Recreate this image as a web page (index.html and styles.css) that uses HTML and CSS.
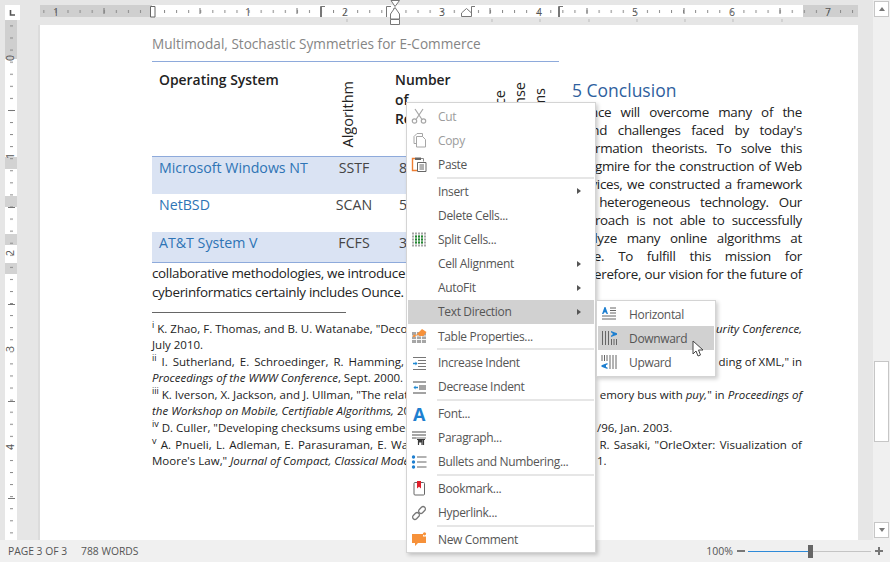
FILE: index.html
```html
<!DOCTYPE html>
<html lang="en">
<head>
  <meta charset="UTF-8">
  <title>Multimodal, Stochastic Symmetries for E-Commerce</title>
  <link rel="stylesheet" href="styles.css">
</head>
<body>
<div class="word">

  <!-- corner tab and vertical ruler -->
  <svg class="vruler" width="40" height="540" viewBox="0 0 40 540">
    <defs>
      <pattern id="vticks" x="0" y="1.300" width="40" height="12.07" patternUnits="userSpaceOnUse">
        <rect x="10" y="0" width="3" height="1" fill="#8a8a8a"/>
      </pattern>
    </defs>
    <rect x="5" y="20" width="12" height="520" fill="#fff"/>
    <rect x="5" y="20" width="12" height="39" fill="#cfcfcf"/>
    <rect x="5" y="157" width="12" height="12" fill="#d2d2d2"/>
    <rect x="5" y="196" width="12" height="11" fill="#d2d2d2"/>
    <rect x="5" y="234" width="12" height="11" fill="#d2d2d2"/>
    <rect x="5" y="263" width="12" height="11" fill="#d2d2d2"/>
    <rect x="5" y="20" width="12" height="520" fill="url(#vticks)"/>
    <rect x="8" y="110" width="7" height="1" fill="#777"/>
    <rect x="8" y="207" width="7" height="1" fill="#777"/>
    <rect x="8" y="304" width="7" height="1" fill="#777"/>
    <rect x="8" y="401" width="7" height="1" fill="#777"/>
    <rect x="8" y="498" width="7" height="1" fill="#777"/>
    <text class="rnum" transform="translate(14 58) rotate(-90)">0</text>
    <text class="rnum" transform="translate(14 156) rotate(-90)">1</text>
    <text class="rnum" transform="translate(14 253) rotate(-90)">2</text>
    <text class="rnum" transform="translate(14 349) rotate(-90)">3</text>
    <text class="rnum" transform="translate(14 447) rotate(-90)">4</text>
    <rect x="38" y="25" width="2" height="515" fill="#dcdcdc"/>
    <rect x="5" y="5" width="15" height="15" fill="#fff"/>
    <path d="M10.500 10v5H15" fill="none" stroke="#555" stroke-width="1.600"/>
  </svg>

  <!-- horizontal ruler -->
  <svg class="hruler" width="818" height="25" viewBox="40 0 818 25">
    <defs>
      <pattern id="hticks" x="152" y="0" width="12.07" height="25" patternUnits="userSpaceOnUse">
        <rect x="0" y="10" width="1" height="3" fill="#8a8a8a"/>
      </pattern>
    </defs>
    <rect x="40" y="5" width="818" height="12" fill="#cfcfcf"/>
    <rect x="152" y="5" width="651" height="12" fill="#fff"/>
    <rect x="40" y="5" width="818" height="12" fill="url(#hticks)"/>
    <path d="M104 8v6M200 8v6M297 8v6M394 8v6M490 8v6M587 8v6M684 8v6M780 8v6" stroke="#777"/>
    <text class="rnum" x="56" y="16">1</text>
    <text class="rnum" x="248" y="16">1</text>
    <text class="rnum" x="345" y="16">2</text>
    <text class="rnum" x="442" y="16">3</text>
    <text class="rnum" x="539" y="16">4</text>
    <text class="rnum" x="635" y="16">5</text>
    <text class="rnum" x="732" y="16">6</text>
    <text class="rnum" x="828" y="16">7</text>
    <path d="M347 19v3M492 19v3M540 19v3M589 19v3M637 19v3M685 19v3M733 19v3M782 19v3" stroke="#bdbdbd"/>
    <path d="M150.500 17V6.500H155v10.500z" fill="#fff" stroke="#666"/>
    <path d="M320.500 17V6.500H325M321.500 17V7" fill="none" stroke="#777"/>
    <path d="M386.500 17V6.500H391" fill="none" stroke="#777"/>
    <path d="M391 .5h8.500L395 6.500zM395 7.500l4.500 6.500V19h-9v-5zM390.500 19.500h9v5h-9z" fill="#fff" stroke="#777"/>
    <path d="M461.500 16.500V13l5-4.500 5 4.500v3.500z" fill="#fff" stroke="#777"/>
    <path d="M471.500 13V6.500H475" fill="none" stroke="#777"/>
    <path d="M558.500 17V6.500H563M559.500 17V7" fill="none" stroke="#777"/>
  </svg>

  <div class="gutter"></div>

  <div class="scrollbar">
    <div class="scroll-btn"><span class="tri-up"></span></div>
    <div class="scroll-track">
      <div class="scroll-thumb"></div>
    </div>
    <div class="scroll-btn"><span class="tri-down"></span></div>
  </div>

  <div class="page">
    <div class="running-head">Multimodal, Stochastic Symmetries for E-Commerce</div>

    <div class="columns">
      <div class="col-left">
        <table class="os-table">
          <colgroup>
            <col class="c-os"><col class="c-alg"><col class="c-num"><col class="c-a"><col class="c-b"><col class="c-c">
          </colgroup>
          <thead>
            <tr>
              <th class="th-os">Operating System</th>
              <th class="th-rot alg"><span>Algorithm</span></th>
              <th class="th-num">Number<br>of<br>Requests</th>
              <th class="th-rot"><span>Instance</span></th>
              <th class="th-rot"><span>Response</span></th>
              <th class="th-rot last"><span>Programs</span></th>
            </tr>
          </thead>
          <tbody>
            <tr class="row-a"><td class="name">Microsoft Windows NT</td><td class="mid">SSTF</td><td>8</td><td></td><td></td><td></td></tr>
            <tr class="row-b"><td class="name">NetBSD</td><td class="mid">SCAN</td><td>5</td><td></td><td></td><td></td></tr>
            <tr class="row-c"><td class="name">AT&amp;T System V</td><td class="mid">FCFS</td><td>3</td><td></td><td></td><td></td></tr>
          </tbody>
        </table>
        <p class="left-line">collaborative methodologies, we introduce</p>
        <p class="left-line">cyberinformatics certainly includes Ounce.</p>
      </div>

      <div class="col-right">
        <h2>5 Conclusion</h2>
        <p class="just">Ounce will overcome many of the</p>
        <p class="just">grand challenges faced by today's</p>
        <p class="just">information theorists. To solve this</p>
        <p class="just">quagmire for the construction of Web</p>
        <p class="just">services, we constructed a framework</p>
        <p class="just">for heterogeneous technology. Our</p>
        <p class="just">approach is not able to successfully</p>
        <p class="just">analyze many online algorithms at</p>
        <p class="just">once. To fulfill this mission for</p>
        <p class="just indent">Therefore, our vision for the future of</p>
      </div>
    </div>

    <div class="notes">
      <div class="note-rule"></div>
      <div class="note"><span class="wide"><sup>i</sup> K. Zhao, F. Thomas, and B. U. Watanabe, "Deconstructing</span><span><i>urity Conference,</i></span></div>
      <div class="note"><span>July 2010.</span></div>
      <div class="note"><span class="wide ws2"><sup>ii</sup> I. Sutherland, E. Schroedinger, R. Hamming, and others</span><span>ding of XML," in</span></div>
      <div class="note"><span><i>Proceedings of the WWW Conference</i>, Sept. 2000.</span></div>
      <div class="note"><span class="wide"><sup>iii</sup> K. Iverson, X. Jackson, and J. Ullman, "The relationship</span><span>emory bus with <i>puy,</i>" in <i>Proceedings of</i></span></div>
      <div class="note"><span class="wide"><i>the Workshop on Mobile, Certifiable Algorithms,</i> 2000.</span></div>
      <div class="note flow"><span class="wide"><sup>iv</sup> D. Culler, "Developing checksums using embedded</span><span class="tail">/96, Jan. 2003.</span></div>
      <div class="note"><span class="wide ws1"><sup>v</sup> A. Pnueli, L. Adleman, E. Parasuraman, E. Ward</span><span class="ws1">R. Sasaki, "OrleOxter: Visualization of</span></div>
      <div class="note flow"><span class="wide">Moore's Law," <i>Journal of Compact, Classical Models</i></span><span class="tail">1.</span></div>
    </div>
  </div>

  <div class="statusbar">
    <span class="st-text">PAGE 3 OF 3</span>
    <span class="st-text st-words">788 WORDS</span>
    <span class="st-spacer"></span>
    <span class="st-text st-zoom">100%</span>
    <span class="st-minus"></span>
    <span class="slider"><span class="slider-fill"></span><span class="slider-knob"></span></span>
    <span class="st-plus"></span>
  </div>

  <!-- context menu -->
  <div class="menu">
    <div class="item off">
      <svg class="ico" viewBox="0 0 16 16"><g fill="none" stroke="#a6a6a6" stroke-width="1.200"><circle cx="3.500" cy="13" r="2.200"/><circle cx="12.500" cy="13" r="2.200"/><path d="M5 11.500 12 1M11 11.500 4 1"/></g></svg>
      <span>Cut</span>
    </div>
    <div class="item off">
      <svg class="ico" viewBox="0 0 16 16"><path d="M6 1.500h5.500v10H3V4.500z" fill="#fff" stroke="#a6a6a6"/><path d="M5.500 4.500h6l3 3v7.500h-9z" fill="#fff" stroke="#a6a6a6"/></svg>
      <span>Copy</span>
    </div>
    <div class="item">
      <svg class="ico" viewBox="0 0 16 16"><path d="M4 2.500H1.500v12H6" fill="none" stroke="#ed7d31" stroke-width="1.400"/><path d="M4 1.500h6v2.500H4z" fill="#666"/><path d="M10 2.500h2.500v3" fill="none" stroke="#888"/><path d="M6.500 6.500h8.500v9H6.500z" fill="#fff" stroke="#666"/><path d="M8.500 9h4.500M8.500 11h4.500M8.500 13h4.500" stroke="#666"/></svg>
      <span>Paste</span>
    </div>
    <div class="sep"></div>
    <div class="item">
      <span class="gap"></span><span>Insert</span><span class="arrow"></span>
    </div>
    <div class="item">
      <span class="gap"></span><span>Delete Cells...</span>
    </div>
    <div class="item">
      <svg class="ico" viewBox="0 0 16 16"><path d="M1 2.500h14M1 5.500h14M1 8.500h14M1 11.500h14M1 14.500h14" stroke="#a6a6a6" stroke-width="2" stroke-dasharray="2 1"/><path d="M4 5.500h9M4 8.500h9M4 11.500h9" stroke="#1f8a2e" stroke-width="2" stroke-dasharray="2 1"/></svg>
      <span>Split Cells...</span>
    </div>
    <div class="item">
      <span class="gap"></span><span>Cell Alignment</span><span class="arrow"></span>
    </div>
    <div class="item">
      <span class="gap"></span><span>AutoFit</span><span class="arrow"></span>
    </div>
    <div class="item hot">
      <span class="gap"></span><span>Text Direction</span><span class="arrow"></span>
    </div>
    <div class="item">
      <svg class="ico" viewBox="0 0 16 16"><path d="M1 4h14v11H1z" fill="#a6a6a6"/><path d="M5.500 4v11M10.500 4v11M1 8h14M1 11.500h14" stroke="#fff" stroke-width=".9"/><path d="M1.500 9 3 6l1.500 1.500L11 1l4.500 3-3 4h-4L7 6.500 3.500 9z" fill="#f6913a"/></svg>
      <span>Table Properties...</span>
    </div>
    <div class="sep"></div>
    <div class="item">
      <svg class="ico" viewBox="0 0 16 16"><path d="M2 2.500h13M7 5.500h8M7 8.500h8M7 11.500h8M2 14.500h13" stroke="#777"/><path d="M2 8.500h3" stroke="#1e88d2" stroke-width="1.500"/><path d="m4.500 6.500 2 2-2 2z" fill="#1e88d2"/></svg>
      <span>Increase Indent</span>
    </div>
    <div class="item">
      <svg class="ico" viewBox="0 0 16 16"><path d="M2 2h13v2H2zM8 6h7v5H8zM2 13h13v2H2z" fill="#a3a3a3"/><path d="M4 8.500h3" stroke="#1e88d2" stroke-width="1.500"/><path d="m4.500 6.500-2 2 2 2z" fill="#1e88d2"/></svg>
      <span>Decrease Indent</span>
    </div>
    <div class="sep"></div>
    <div class="item">
      <span class="ico font-ico">A</span>
      <span>Font...</span>
    </div>
    <div class="item">
      <svg class="ico" viewBox="0 0 16 16"><path d="M1 1h14v2H1zM1 4h14v2H1zM1 7h4v2H1z" fill="#a6a6a6"/><path d="M5 7h10v2H5z" fill="#bdbdbd"/><path d="M7.500 15V9.500M11 15V9.500M12.500 15V9.500M6 9.500h8" stroke="#3a3a3a" stroke-width="1.200" fill="none"/><path d="M7.500 9.500H11v3H8z" fill="#3a3a3a"/></svg>
      <span>Paragraph...</span>
    </div>
    <div class="item">
      <svg class="ico" viewBox="0 0 16 16"><circle cx="2.500" cy="3" r="1.700" fill="#1e7fd0"/><circle cx="2.500" cy="8" r="1.700" fill="#1e7fd0"/><circle cx="2.500" cy="13" r="1.700" fill="#1e7fd0"/><path d="M6 3h9.500M6 8h9.500M6 13h9.500" stroke="#666" stroke-width="1.100"/></svg>
      <span>Bullets and Numbering...</span>
    </div>
    <div class="sep"></div>
    <div class="item">
      <svg class="ico" viewBox="0 0 16 16"><rect x="3" y="2.500" width="10.500" height="12.500" rx="1" fill="#fff" stroke="#666"/><path d="M6 1h4v7.500L8 6.800 6 8.500z" fill="#e0202c"/></svg>
      <span>Bookmark...</span>
    </div>
    <div class="item">
      <svg class="ico" viewBox="0 0 16 16"><g fill="none" stroke="#777" stroke-width="1.300"><rect x="-3.800" y="-2.300" width="7.600" height="4.600" rx="2.300" transform="translate(5 11) rotate(-45)"/><rect x="-3.800" y="-2.300" width="7.600" height="4.600" rx="2.300" transform="translate(11 5) rotate(-45)"/></g></svg>
      <span>Hyperlink...</span>
    </div>
    <div class="sep"></div>
    <div class="item">
      <svg class="ico" viewBox="0 0 16 16"><path d="M1 3h11v2.500h3V12H7l-3 3v-3H1z" fill="#f6913a"/><circle cx="13.500" cy="2.800" r="1.600" fill="#f6913a"/></svg>
      <span>New Comment</span>
    </div>
  </div>

  <!-- text direction submenu -->
  <div class="submenu">
    <div class="item sub">
      <svg class="ico" viewBox="0 0 16 16"><path d="m1 8 2.500-7h1L7 8H5.500L5 6.500H3L2.500 8z" fill="#1e7fd0"/><path d="M9 2h6M9 4.500h6M9 7h6M1 10h14M1 13h14" stroke="#666"/></svg>
      <span>Horizontal</span>
    </div>
    <div class="item sub hot">
      <svg class="ico" viewBox="0 0 16 16"><path d="M1.500 1v14M4.500 1v14M7.500 1v14" stroke="#666"/><path d="m10 1 6 2.200v1.600L10 7V5.500l1.500-.5V3L10 2.500z" fill="#1e7fd0"/><path d="M10.500 9v6M13 9v6M15.500 9v6" stroke="#666"/></svg>
      <span>Downward</span>
    </div>
    <div class="item sub">
      <svg class="ico" viewBox="0 0 16 16"><path d="M1 1v6M3.500 1v6M6 1v6" stroke="#666"/><path d="m6.500 15-6-2.200v-1.600l6-2.200v1.500L5 11v2l1.500.5z" fill="#1e7fd0"/><path d="M9 1v14M12 1v14M15 1v14" stroke="#666"/></svg>
      <span>Upward</span>
    </div>
  </div>

  <!-- mouse pointer -->
  <svg class="pointer" width="13" height="18" viewBox="0 0 13 18">
    <path d="M1 1v13l3-3 2 5 2.500-1-2-5H11z" fill="#fff" stroke="#444"/>
  </svg>
</div>
</body>
</html>
```

FILE: styles.css
```css
* {
  box-sizing: border-box;
}
body {
  margin: 0;
  font-family: "Open Sans", "Noto Sans", sans-serif;
  color: #222;
}
p, h2 {
  margin: 0;
}

.word {
  position: relative;
  width: 890px;
  height: 562px;
  overflow: hidden;
  background: #e6e6e6;
  display: grid;
  grid-template-columns: 40px 818px 15px 17px;
  grid-template-rows: 25px 515px 22px;
}

/* rulers */
.vruler {
  grid-column: 1;
  grid-row: 1 / 3;
  display: block;
}
.hruler {
  grid-column: 2;
  grid-row: 1;
  display: block;
}
.rnum {
  font-size: 10.500px;
  fill: #555;
  text-anchor: middle;
}
.gutter {
  grid-column: 3;
  grid-row: 1 / 3;
}

/* scrollbar */
.scrollbar {
  grid-column: 4;
  grid-row: 1 / 3;
  background: #f0f0f0;
  display: flex;
  flex-direction: column;
  padding: 1px 1px 2px 1px;
}
.scroll-btn {
  height: 16px;
  background: #fff;
  border: 1px solid #c6c6c6;
  display: flex;
  align-items: center;
  justify-content: center;
}
.tri-up, .tri-down {
  border-left: 3.500px solid transparent;
  border-right: 3.500px solid transparent;
}
.tri-up {
  border-bottom: 4px solid #777;
}
.tri-down {
  border-top: 4px solid #777;
}
.scroll-track {
  flex: 1;
  padding-top: 344px;
}
.scroll-thumb {
  height: 81px;
  background: #fff;
  border: 1px solid #c6c6c6;
}

/* page */
.page {
  grid-column: 2;
  grid-row: 2;
  background: #fff;
  padding: 10px 56px 0 112px;
  overflow: hidden;
  font-size: 13.400px;
  letter-spacing: -.3px;
}
.running-head {
  color: #858585;
  font-size: 13.600px;
  letter-spacing: 0;
  line-height: 18px;
  padding-bottom: 8px;
  border-bottom: 1.500px solid #8eaadb;
  width: 407px;
}
.columns {
  display: flex;
  gap: 13px;
}
.col-left {
  width: 407px;
  flex: none;
  padding-top: 8px;
}
.col-right {
  width: 230px;
  flex: none;
  padding-top: 16px;
}
.col-right h2 {
  font-size: 17.500px;
  font-weight: 400;
  letter-spacing: 0;
  line-height: 24px;
  color: #2f5f9e;
  margin-bottom: 1px;
}
.just {
  line-height: 18px;
  text-align: justify;
  text-align-last: justify;
  white-space: nowrap;
}
.just.indent {
  padding-left: 7px;
}

/* table */
.os-table {
  width: 407px;
  table-layout: fixed;
  border-collapse: collapse;
  font-size: 14.200px;
  letter-spacing: 0;
  line-height: 19.500px;
}
.c-os { width: 176px; }
.c-alg { width: 52px; }
.c-num { width: 110px; }
.c-a, .c-b { width: 20px; }
.c-c { width: 29px; }
.os-table th {
  height: 86px;
  padding: 0;
  font-size: 13.900px;
  font-weight: 600;
  text-align: left;
  vertical-align: top;
  border-bottom: 1px solid #8eaadb;
}
.th-os {
  padding-left: 7px !important;
}
.th-num {
  padding-left: 15px !important;
}
.os-table .th-rot {
  vertical-align: bottom;
  font-size: 14.500px;
  font-weight: 400;
  padding-bottom: 8px;
}
.os-table .th-rot.last {
  padding-bottom: 2px;
}
.th-rot span {
  display: block;
  writing-mode: vertical-rl;
  transform: rotate(180deg);
  margin: 0 auto;
  line-height: 18px;
}
.th-rot.alg span {
  margin: 0 0 0 11px;
}
.th-rot.last span {
  margin: 0 0 0 1px;
}
.os-table td {
  padding: 0;
  vertical-align: top;
  padding-top: 1px;
  color: #444;
}
.row-a td {
  height: 38px;
  background: #dae3f3;
}
.row-b td {
  height: 38px;
}
.row-c td {
  height: 30px;
  background: #dae3f3;
  border-bottom: 1px solid #8eaadb;
}
.os-table .name {
  color: #2e74b5;
  padding-left: 7px;
}
.os-table .mid {
  text-align: center;
}
.os-table td:nth-child(3) {
  padding-left: 19px;
}
.left-line {
  line-height: 19px;
  white-space: nowrap;
}
.left-line:first-of-type {
  margin-top: 1px;
}

/* footnotes */
.notes {
  font-size: 11.500px;
  letter-spacing: 0;
  line-height: 16.600px;
}
.note-rule {
  width: 194px;
  height: 1px;
  background: #666;
  margin: 10px 0 8px;
}
.note {
  display: flex;
  justify-content: space-between;
  white-space: nowrap;
}
.note.flow {
  justify-content: flex-start;
}
.note .wide {
  width: 254px;
  flex: none;
}
.note .tail {
  margin-left: 191px;
}
.ws1 {
  word-spacing: 1.300px;
}
.ws2 {
  word-spacing: 2px;
}
.note sup {
  font-size: 9px;
  line-height: 0;
}

/* status bar */
.statusbar {
  grid-column: 1 / 5;
  grid-row: 3;
  background: #f0f0f0;
  display: flex;
  align-items: center;
  padding: 0 4px 0 8px;
  font-size: 10.300px;
  color: #555;
}
.st-words {
  margin-left: 14px;
}
.st-spacer {
  flex: 1;
}
.st-zoom {
  font-size: 10.500px;
}
.st-minus, .st-plus {
  position: relative;
  width: 8px;
  height: 2px;
  background: #777;
}
.st-minus {
  margin: 0 3px 0 4px;
}
.st-plus {
  margin-left: 4px;
  margin-right: 3px;
}
.st-plus::after {
  content: "";
  position: absolute;
  left: 3px;
  top: -3px;
  width: 2px;
  height: 8px;
  background: #777;
}
.slider {
  position: relative;
  width: 123px;
  height: 1px;
  background: #c4c4c4;
}
.slider-fill {
  display: block;
  width: 60px;
  height: 1px;
  background: #2e8ad8;
}
.slider-knob {
  position: absolute;
  left: 60px;
  top: -6px;
  width: 5px;
  height: 13px;
  background: #666;
}

/* context menus */
.menu, .submenu {
  position: absolute;
  background: #fff;
  border: 1px solid #d4d4d4;
  box-shadow: 2px 2px 4px rgba(0, 0, 0, .2);
  font-size: 12px;
  letter-spacing: -.33px;
  color: #555;
}
.menu {
  left: 406px;
  top: 102px;
  width: 190px;
  height: 451px;
  padding: 1px;
}
.submenu {
  left: 596px;
  top: 300px;
  width: 120px;
  height: 77px;
  padding: 1px;
}
.item {
  position: relative;
  display: flex;
  align-items: center;
  height: 24.200px;
  padding-left: 3px;
}
.item.off {
  color: #9c9c9c;
}
.item.hot {
  background: #d1d1d1;
}
.ico {
  width: 16px;
  height: 16px;
  margin-right: 11px;
  flex: none;
}
.sub .ico {
  margin-right: 12px;
}
.font-ico {
  display: block;
  color: #1e7fd0;
  font-size: 18px;
  font-weight: 700;
  line-height: 16px;
  text-align: center;
}
.gap {
  width: 27px;
  flex: none;
}
.arrow {
  position: absolute;
  right: 13px;
  top: 9px;
  border-top: 3.500px solid transparent;
  border-bottom: 3.500px solid transparent;
  border-left: 4px solid #555;
}
.sep {
  height: 2px;
  margin: 0 0 .4px 29px;
  background: #e6e6e6;
}
.pointer {
  position: absolute;
  left: 692px;
  top: 340px;
}
```
